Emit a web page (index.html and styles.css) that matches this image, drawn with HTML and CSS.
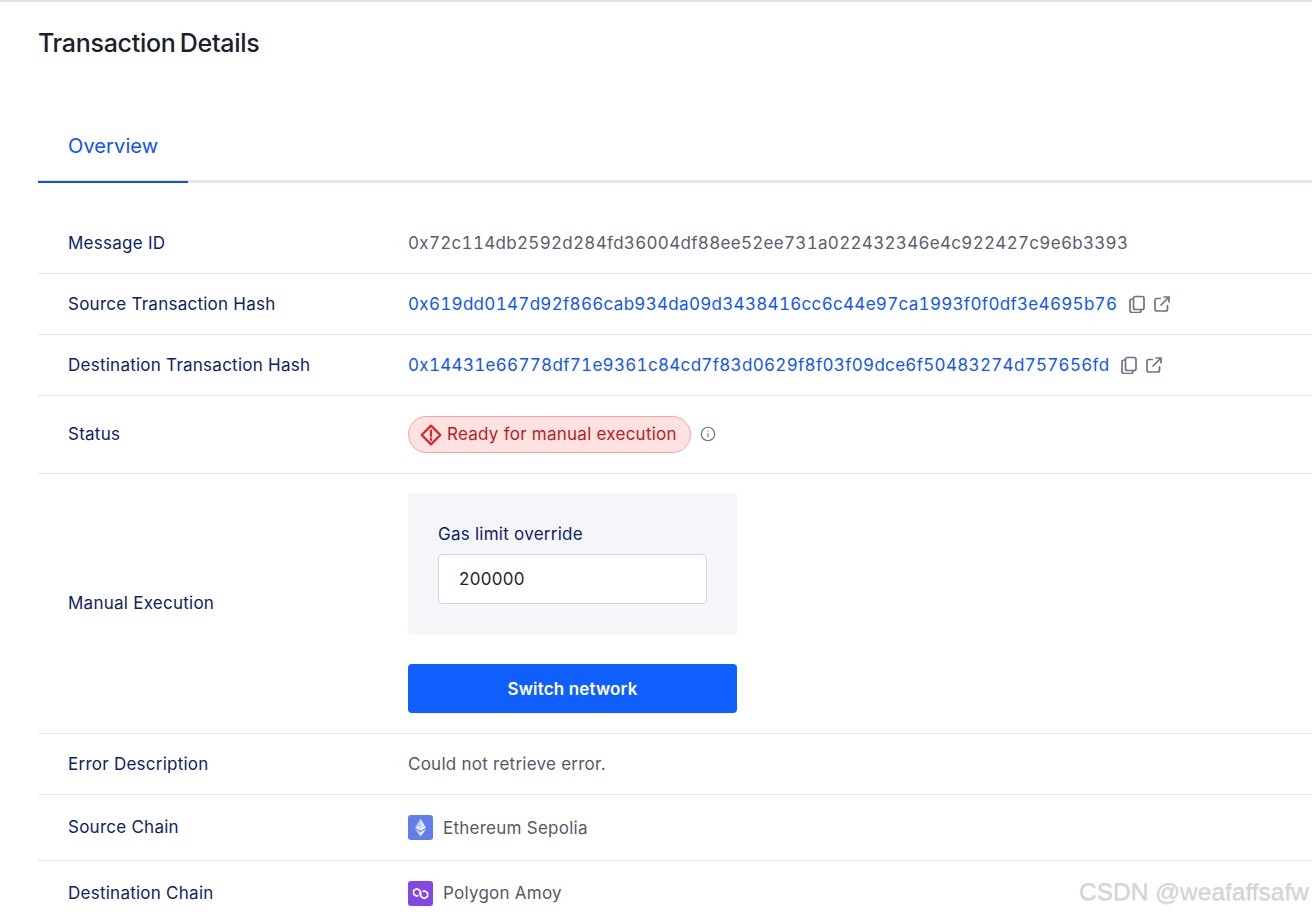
FILE: index.html
```html
<!DOCTYPE html>
<html lang="en">
<head>
<meta charset="utf-8">
<title>Transaction Details</title>
<link rel="stylesheet" href="styles.css">
</head>
<body>
<div class="topline"></div>
<main class="page">
  <h1 class="title">Transaction Details</h1>
  <div class="tabs"><div class="tab">Overview</div></div>
  <section class="details">
    <div class="row r-id">
      <div class="label">Message ID</div>
      <div class="value hash">0x72c114db2592d284fd36004df88ee52ee731a022432346e4c922427c9e6b3393</div>
    </div>
    <div class="row r-hash">
      <div class="label">Source Transaction Hash</div>
      <div class="value">
        <a class="hash link">0x619dd0147d92f866cab934da09d3438416cc6c44e97ca1993f0f0df3e4695b76</a>
        <svg class="ic ic-copy" viewBox="0 0 18 18"><rect x="5.5" y="1.5" width="10.5" height="13" rx="2"/><path d="M5.5 4H4a2 2 0 0 0-2 2v9.5a2 2 0 0 0 2 2h7a2 2 0 0 0 2-2v-1"/></svg>
        <svg class="ic ic-ext" viewBox="0 0 18 18"><path d="M8 3.5H4A2 2 0 0 0 2 5.500V14a2 2 0 0 0 2 2h8.500a2 2 0 0 0 2-2v-4"/><path d="M7.500 10.500L15.500 2.500M10.500 2h5.500v5.500"/></svg>
      </div>
    </div>
    <div class="row r-hash">
      <div class="label">Destination Transaction Hash</div>
      <div class="value">
        <a class="hash link">0x14431e66778df71e9361c84cd7f83d0629f8f03f09dce6f50483274d757656fd</a>
        <svg class="ic ic-copy" viewBox="0 0 18 18"><rect x="5.5" y="1.5" width="10.5" height="13" rx="2"/><path d="M5.5 4H4a2 2 0 0 0-2 2v9.5a2 2 0 0 0 2 2h7a2 2 0 0 0 2-2v-1"/></svg>
        <svg class="ic ic-ext" viewBox="0 0 18 18"><path d="M8 3.5H4A2 2 0 0 0 2 5.500V14a2 2 0 0 0 2 2h8.500a2 2 0 0 0 2-2v-4"/><path d="M7.500 10.500L15.500 2.500M10.500 2h5.500v5.500"/></svg>
      </div>
    </div>
    <div class="row r-status">
      <div class="label lift">Status</div>
      <div class="value">
        <span class="badge">
          <svg class="badge-ic" viewBox="0 0 20 20"><path d="M10 1.500L18.500 10L10 18.500L1.500 10Z"/><path d="M10 6v5M10 13.200v1.300"/></svg>
          <span class="lift">Ready for manual execution</span>
        </span>
        <svg class="info" viewBox="0 0 16 16"><circle cx="8" cy="8" r="6.700"/><path d="M8 7.300v4M8 4.600v1.200"/></svg>
      </div>
    </div>
    <div class="row r-manual">
      <div class="label lift">Manual Execution</div>
      <div class="manual">
        <div class="gas">
          <label class="gas-label">Gas limit override</label>
          <div class="gas-input">200000</div>
        </div>
        <button class="btn">Switch network</button>
      </div>
    </div>
    <div class="row r-id">
      <div class="label">Error Description</div>
      <div class="value muted">Could not retrieve error.</div>
    </div>
    <div class="row r-chain">
      <div class="label lift">Source Chain</div>
      <div class="value muted chain">
        <svg class="chain-ic" viewBox="0 0 25 25"><rect width="25" height="25" rx="3" fill="#627eea"/><path d="M12.500 3.500L7 12.700l5.500-2.500z" fill="#fff" opacity=".6"/><path d="M12.500 3.500L18 12.700l-5.500-2.500z" fill="#fff" opacity=".85"/><path d="M7 12.700l5.500 3.200v-5.700z" fill="#fff" opacity=".85"/><path d="M18 12.700l-5.500 3.200v-5.700z" fill="#e3e8fb"/><path d="M7 14l5.500 7.500v-4.300z" fill="#fff" opacity=".7"/><path d="M18 14l-5.500 7.500v-4.300z" fill="#fff"/></svg>
        <span>Ethereum Sepolia</span>
      </div>
    </div>
    <div class="row r-chain no-line">
      <div class="label lift">Destination Chain</div>
      <div class="value muted chain">
        <svg class="chain-ic" viewBox="0 0 25 25"><rect width="25" height="25" rx="3" fill="#8247e5"/><path d="M12 14.200V9.500L8.800 7.600 5.600 9.500v3.800l3.200 1.900 1.600-.9" fill="none" stroke="#fff" stroke-width="1.600" stroke-linejoin="round"/><path d="M12.800 10.900V15.500l3.400 2 3.400-2v-3.800l-3.400-2-1.600.9" fill="none" stroke="#fff" stroke-width="1.600" stroke-linejoin="round"/></svg>
        <span class="lift">Polygon Amoy</span>
      </div>
    </div>
  </section>
</main>
<div class="watermark">CSDN @weafaffsafw</div>
</body>
</html>
```
FILE: styles.css
```css
html, body { margin: 0; padding: 0; height: 914px; overflow: hidden; background: #fff; }
body { font-family: Inter, "Liberation Sans", sans-serif; position: relative; font-size: 17px; }
.topline { height: 2px; background: #e4e4e4; }
.page { padding: 0 0 0 38px; }
.title { margin: 0; padding-top: 25px; height: 32px; font-size: 25px; line-height: 32px; font-weight: 500; letter-spacing: -0.3px; word-spacing: -2px; color: #1a212c; }
.tabs { margin-top: 56px; border-bottom: 3px solid #e3e6ea; height: 65px; }
.tab { width: 150px; height: 66px; line-height: 62px; font-size: 20px; letter-spacing: 0.1px; text-indent: 30px; color: #0f4fff; border-bottom: 2px solid #0f4fff; }
.details { margin-top: 30px; }
.row { display: flex; align-items: center; border-bottom: 1px solid #e6e7ea; padding-left: 30px; }
.no-line { border-bottom: 0; }
.r-id { height: 60px; }
.r-hash { height: 60px; }
.r-status { height: 77px; }
.r-manual { height: 259px; }
.r-chain { height: 65px; }
.label { width: 340px; flex: none; color: #0c2366; letter-spacing: 0.25px; }
.lift { padding-bottom: 2px; }
.value { display: flex; align-items: center; color: #525a68; letter-spacing: 0.25px; }
.hash { letter-spacing: 0.306px; font-variant-numeric: tabular-nums; color: #58606e; }
.link { color: #0f55ff; }
.ic { fill: none; stroke: #6d7482; stroke-width: 1.700; width: 18px; height: 18px; flex: none; }
.ic-copy { margin-left: 11px; }
.ic-ext { margin-left: 7px; }
.badge { display: flex; align-items: center; gap: 5px; height: 35px; padding: 0 13px 0 11px; border: 1px solid #f7a3a3; border-radius: 19px; background: #fee2e2; color: #b91c1c; }
.badge-ic { width: 22px; height: 22px; fill: none; stroke: #dc2626; stroke-width: 2; flex: none; stroke-linejoin: round; stroke-linecap: round; }
.info { width: 16px; height: 16px; margin: 0 0 2px 9px; fill: none; stroke: #6b7280; stroke-width: 1.100; flex: none; }
.manual { display: flex; flex-direction: column; gap: 30px; width: 329px; }
.gas { background: #f5f6fa; height: 140px; box-sizing: border-box; padding: 28px 30px 0; }
.gas-label { display: block; color: #0c2366; line-height: 24px; letter-spacing: 0.25px; margin-bottom: 8px; }
.gas-input { height: 50px; box-sizing: border-box; border: 1px solid #d1d5de; border-radius: 4px; background: #fff; padding-left: 20px; line-height: 48px; color: #1f2430; letter-spacing: 0.3px; }
.btn { display: block; width: 100%; height: 49px; border: 0; border-radius: 4px; background: #0f5fff; color: #fff; font: 600 17px Inter, "Liberation Sans", sans-serif; letter-spacing: 0.15px; }
.chain { gap: 10px; }
.chain-ic { width: 25px; height: 25px; flex: none; }
.watermark { position: absolute; right: 3px; bottom: 8px; font: 24.500px "Liberation Sans", sans-serif; color: #d4d4d4; text-shadow: 0 1px 1px rgba(0,0,0,.12); }
```
